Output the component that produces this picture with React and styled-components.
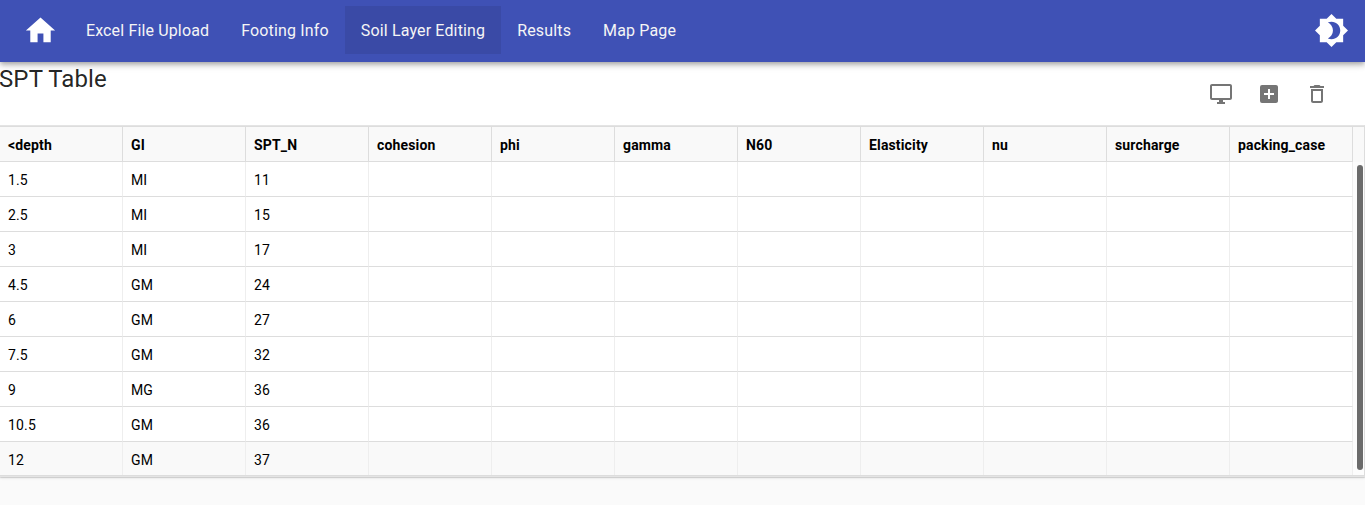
import React from "react";
import styled, { createGlobalStyle, css } from "styled-components";
import {
  MdHome,
  MdBrightness4,
  MdOutlineDesktopWindows,
  MdAddBox,
  MdDeleteOutline,
} from "react-icons/md";

const GlobalStyle = createGlobalStyle`
  *, *::before, *::after { box-sizing: border-box; }
  html, body { margin: 0; height: 100%; overflow: hidden; }
  body {
    background: #fafafa;
    color: rgba(0, 0, 0, 0.87);
    font-family: Roboto, "Liberation Sans", sans-serif;
  }
`;

const AppBar = styled.header`
  position: relative;
  z-index: 1;
  display: flex;
  align-items: center;
  height: 62px;
  padding: 0 16px 1px 23px;
  background: #3f51b5;
  color: #fff;
  box-shadow: 0 2px 4px -1px rgba(0, 0, 0, 0.2),
    0 4px 5px 0 rgba(0, 0, 0, 0.14), 0 1px 10px 0 rgba(0, 0, 0, 0.12);
`;

const BarIcon = styled.a`
  display: flex;
  color: inherit;
  svg {
    width: 35px;
    height: 35px;
  }
`;

const Nav = styled.nav`
  display: flex;
  flex: 1;
  margin: 0 0 1px 11.9px;
`;

const NavItem = styled.a`
  height: 48px;
  padding: 0 16px;
  font-size: 16px;
  line-height: 50px;
  letter-spacing: 0.15008px;
  white-space: nowrap;
  color: #f5f5f5;
  background: ${(p) => (p.$active ? "rgba(0, 0, 0, 0.08)" : "transparent")};
`;

const Panel = styled.main`
  background: #fff;
  box-shadow: 0 1px 1px -1px rgba(0, 0, 0, 0.16),
    0 1px 1px 0 rgba(0, 0, 0, 0.1), 0 1px 3px 0 rgba(0, 0, 0, 0.08);
`;

const Toolbar = styled.div`
  display: flex;
  justify-content: space-between;
  height: 63px;
  padding-right: 24px;
`;

const Title = styled.h1`
  margin: 0 0 0 -1px;
  font-size: 24px;
  font-weight: 400;
  line-height: 35px;
  letter-spacing: 0.12px;
`;

const Actions = styled.div`
  display: flex;
  padding-top: 8px;
`;

const IconButton = styled.button`
  display: flex;
  width: 48px;
  height: 48px;
  padding: 12px;
  border: 0;
  background: none;
  color: rgba(0, 0, 0, 0.54);
  svg {
    width: 24px;
    height: 24px;
  }
`;

const GridFrame = styled.div`
  display: flex;
  height: 352px;
  border: 1px solid #e4e4e4;
  border-left: 0;
  border-right-color: #ddd;
`;

const Grid = styled.div`
  flex: 1;
  border-top: 1px solid #ddd;
  border-bottom: 1px solid #ddd;
  overflow: hidden;
`;

const Row = styled.div`
  display: grid;
  grid-template-columns: repeat(11, 123px);
  grid-template-rows: 35px;
  height: 35px;
  background: ${(p) => (p.$striped ? "#f9f9f9" : "#fff")};
`;

const cell = css`
  height: 35px;
  padding: 0 8px;
  border-right: 1px solid #eee;
  border-bottom: 1px solid #ddd;
  font-size: 14px;
  line-height: 37px;
  letter-spacing: 0.01071em;
  white-space: nowrap;
  color: #000;
`;

const Cell = styled.div`
  ${cell}
`;

const HeaderCell = styled.div`
  ${cell}
  border-right-color: #ddd;
  background: #f9f9f9;
  font-weight: 700;
`;

const ScrollGutter = styled.div`
  width: 11px;
  border-top: 1px solid #ddd;
  border-bottom: 1px solid #ddd;
  background: linear-gradient(#f9f9f9 35px, #fcfcfc 35px);
  padding: 38px 1px 5px 4px;
`;

const ScrollThumb = styled.div`
  width: 6px;
  height: 305px;
  border-radius: 3px;
  background: #6b6b6b;
`;

const pages = ["Excel File Upload", "Footing Info", "Soil Layer Editing", "Results", "Map Page"];

const columns = [
  "<depth", "GI", "SPT_N", "cohesion", "phi", "gamma",
  "N60", "Elasticity", "nu", "surcharge", "packing_case",
];

const layers = [
  ["1.5", "MI", "11"],
  ["2.5", "MI", "15"],
  ["3", "MI", "17"],
  ["4.5", "GM", "24"],
  ["6", "GM", "27"],
  ["7.5", "GM", "32"],
  ["9", "MG", "36"],
  ["10.5", "GM", "36"],
  ["12", "GM", "37"],
];

export default function App() {
  return (
    <>
      <GlobalStyle />
      <AppBar>
        <BarIcon aria-label="Home"><MdHome /></BarIcon>
        <Nav>
          {pages.map((page) => (
            <NavItem key={page} $active={page === "Soil Layer Editing"}>{page}</NavItem>
          ))}
        </Nav>
        <BarIcon aria-label="Toggle theme"><MdBrightness4 /></BarIcon>
      </AppBar>
      <Panel>
        <Toolbar>
          <Title>SPT Table</Title>
          <Actions>
            <IconButton aria-label="Display"><MdOutlineDesktopWindows /></IconButton>
            <IconButton aria-label="Add row"><MdAddBox /></IconButton>
            <IconButton aria-label="Delete row"><MdDeleteOutline /></IconButton>
          </Actions>
        </Toolbar>
        <GridFrame>
          <Grid>
            <Row>
              {columns.map((name) => <HeaderCell key={name}>{name}</HeaderCell>)}
            </Row>
            {layers.map((layer, i) => (
              <Row key={layer[0]} $striped={i === layers.length - 1}>
                {columns.map((name, c) => <Cell key={name}>{layer[c]}</Cell>)}
              </Row>
            ))}
          </Grid>
          <ScrollGutter><ScrollThumb /></ScrollGutter>
        </GridFrame>
      </Panel>
    </>
  );
}
